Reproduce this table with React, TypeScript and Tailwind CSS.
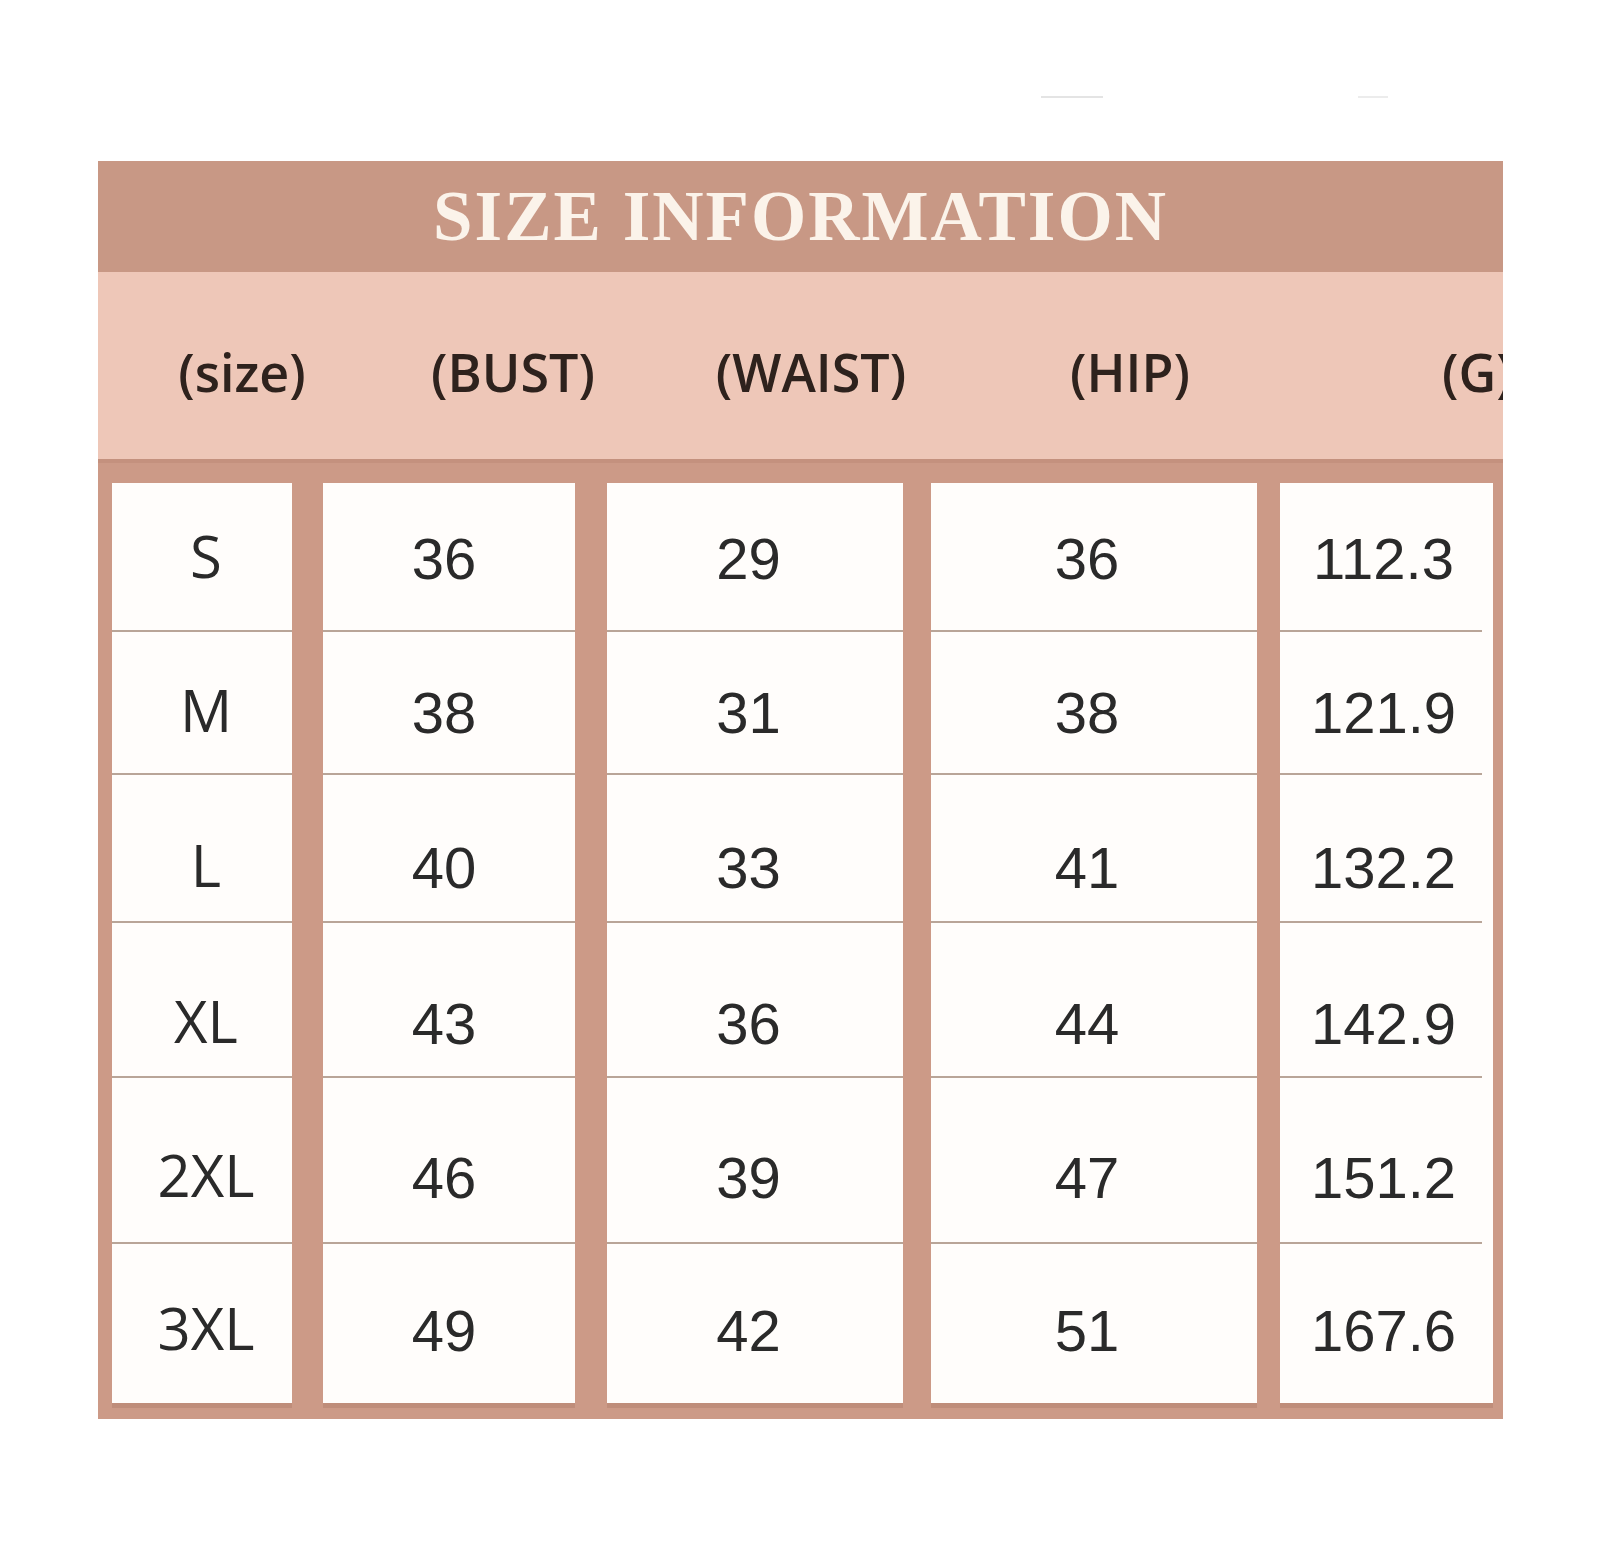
const rows = [
  { size: 'S', bust: '36', waist: '29', hip: '36', g: '112.3', h: 'h-[147px]', pt: 'pt-[47px]' },
  { size: 'M', bust: '38', waist: '31', hip: '38', g: '121.9', h: 'h-[141px]', pt: 'pt-[52px]' },
  { size: 'L', bust: '40', waist: '33', hip: '41', g: '132.2', h: 'h-[146px]', pt: 'pt-[64px]' },
  { size: 'XL', bust: '43', waist: '36', hip: '44', g: '142.9', h: 'h-[153px]', pt: 'pt-[72px]' },
  { size: '2XL', bust: '46', waist: '39', hip: '47', g: '151.2', h: 'h-[164px]', pt: 'pt-[71px]' },
  { size: '3XL', bust: '49', waist: '42', hip: '51', g: '167.6', h: 'h-[159px]', pt: 'pt-[58px]' },
];

type Key = 'size' | 'bust' | 'waist' | 'hip' | 'g';

const NUM_FONT = "font-['Liberation_Sans',Arial,sans-serif]";

const columns: { key: Key; cls: string; font: string; cell: string; line: string }[] = [
  { key: 'size', cls: 'w-[180px]', font: "font-['Open_Sans',sans-serif] -mt-[3px]", cell: 'pl-[8px]', line: '' },
  { key: 'bust', cls: 'w-[252px] ml-[31px]', font: NUM_FONT, cell: 'pr-[10px]', line: '' },
  { key: 'waist', cls: 'w-[296px] ml-[32px]', font: NUM_FONT, cell: 'pr-[13px]', line: '' },
  { key: 'hip', cls: 'w-[326px] ml-[28px]', font: NUM_FONT, cell: 'pr-[14px]', line: '' },
  { key: 'g', cls: 'w-[213px] ml-[23px]', font: NUM_FONT, cell: 'pr-[6px]', line: 'mr-[11px]' },
];

const headers = [
  { label: '(size)', cls: 'w-[288px] justify-center' },
  { label: '(BUST)', cls: 'w-[254px] justify-center' },
  { label: '(WAIST)', cls: 'w-[342px] justify-center' },
  { label: '(HIP)', cls: 'w-[296px] justify-center' },
  { label: '(G)', cls: 'w-[225px] justify-start pl-[164px]' },
];

export default function App() {
  return (
    <div className="min-h-[1550px] w-[1600px] bg-white">
      {/* faint scan remnants at the top */}
      <div className="flex pt-[96px] h-[98px]">
        <div className="ml-[1041px] w-[62px] h-[2px] bg-[#e4e4e4]" />
        <div className="ml-[255px] w-[30px] h-[2px] bg-[#ececec]" />
      </div>

      <div className="mt-[63px] ml-[98px] w-[1405px]">
        {/* title band */}
        <div className="h-[111px] bg-[#c89885] flex items-center justify-center">
          <h1 className="font-['Liberation_Serif','Times_New_Roman',serif] font-bold text-[71px] leading-none tracking-[2px] text-[#fbf3ea]">
            SIZE INFORMATION
          </h1>
        </div>

        {/* header labels, the last one runs off the edge as in the print */}
        <div className="h-[187px] bg-[#eec7b8] flex overflow-hidden">
          {headers.map((h) => (
            <div key={h.label} className={`flex shrink-0 pt-[74px] ${h.cls}`}>
              <span className="font-['Open_Sans',sans-serif] font-semibold text-[52px] leading-none text-[#2e221d] whitespace-nowrap">
                {h.label}
              </span>
            </div>
          ))}
        </div>

        {/* body */}
        <div className="bg-[#cc9a87] border-t-[4px] border-[#c4917e] pt-[20px] pl-[14px] pr-[10px] pb-[16px] flex">
          {columns.map((col) => (
            <div key={col.key} className={`bg-[#fffdfb] flex flex-col shrink-0 shadow-[0_5px_0_#bf8d7a] ${col.cls}`}>
              {rows.map((r, i) => (
                <div key={r.size}>
                  {i > 0 && <div className={`h-[2px] bg-[#b9a598] ${col.line}`} />}
                  <div className={`flex justify-center items-start ${r.h} ${r.pt} ${col.cell}`}>
                    <span className={`text-[58px] leading-none text-[#2a2a2a] ${col.font}`}>
                      {r[col.key]}
                    </span>
                  </div>
                </div>
              ))}
            </div>
          ))}
        </div>
      </div>
    </div>
  );
}
